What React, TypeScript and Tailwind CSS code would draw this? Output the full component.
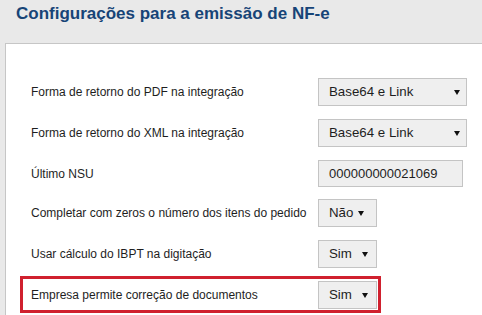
import type { ReactNode } from 'react'

const font = { fontFamily: '"Liberation Sans", Arial, sans-serif' }

function Arrow() {
  return (
    <svg width="6" height="5" viewBox="0 0 6 5" className="shrink-0">
      <polygon points="0,0 6,0 3,5" fill="#111" />
    </svg>
  )
}

// select "fake" com seta preta à direita
function FakeSelect({ value, size }: { value: string; size: 'wide' | 'nao' | 'sim' }) {
  const w =
    size === 'wide' ? 'w-[149px] pr-[6px]' : size === 'nao' ? 'w-[59px] pr-[12px]' : 'w-[59px] pr-[8px]'
  return (
    <div
      className={
        'flex h-[28px] items-center border border-[#c4c4c4] bg-[#efefef] pl-[10px] text-[13.3px] text-[#1e1e1e] ' + w
      }
    >
      <span>{value}</span>
      <span className="ml-auto">
        <Arrow />
      </span>
    </div>
  )
}

function Row({ label, children, className }: { label: string; children: ReactNode; className?: string }) {
  return (
    <div className={'flex items-center ' + (className || '')}>
      <div className="w-[287px] text-[12px] text-[#1e1e1e]">{label}</div>
      {children}
    </div>
  )
}

export default function App() {
  return (
    <div className="h-[315px] w-[482px] overflow-hidden bg-[#e9e9e9]" style={font}>
      {/* Cabeçalho */}
      <h1 className="h-[43px] pl-[16px] pt-[5px] text-[17px] font-bold leading-none text-[#174477]">
        Configurações para a emissão de NF-e
      </h1>

      {/* Painel */}
      <div className="ml-[5px] h-[300px] w-[520px] border border-[#c6c6c6] bg-white pl-[25px] pt-[34px]">
        <Row label="Forma de retorno do PDF na integração">
          <FakeSelect value="Base64 e Link" size="wide" />
        </Row>
        <Row label="Forma de retorno do XML na integração" className="mt-[13px]">
          <FakeSelect value="Base64 e Link" size="wide" />
        </Row>
        <Row label="Último NSU" className="mt-[13px]">
          <div className="flex h-[27px] w-[145px] items-center border border-[#c4c4c4] bg-[#efefef] pl-[10px] text-[13px] text-[#1e1e1e]">
            000000000021069
          </div>
        </Row>
        <Row label="Completar com zeros o número dos itens do pedido" className="mt-[12px]">
          <FakeSelect value="Não" size="nao" />
        </Row>
        <Row label="Usar cálculo do IBPT na digitação" className="mt-[13px]">
          <FakeSelect value="Sim" size="sim" />
        </Row>

        {/* destaque vermelho */}
        <div className="-ml-[11px] mt-[8px] w-fit border-[3px] border-[#d0202e] pb-[1px] pl-[8px] pr-[1px] pt-[2px]">
          <Row label="Empresa permite correção de documentos">
            <FakeSelect value="Sim" size="sim" />
          </Row>
        </div>
      </div>
    </div>
  )
}
